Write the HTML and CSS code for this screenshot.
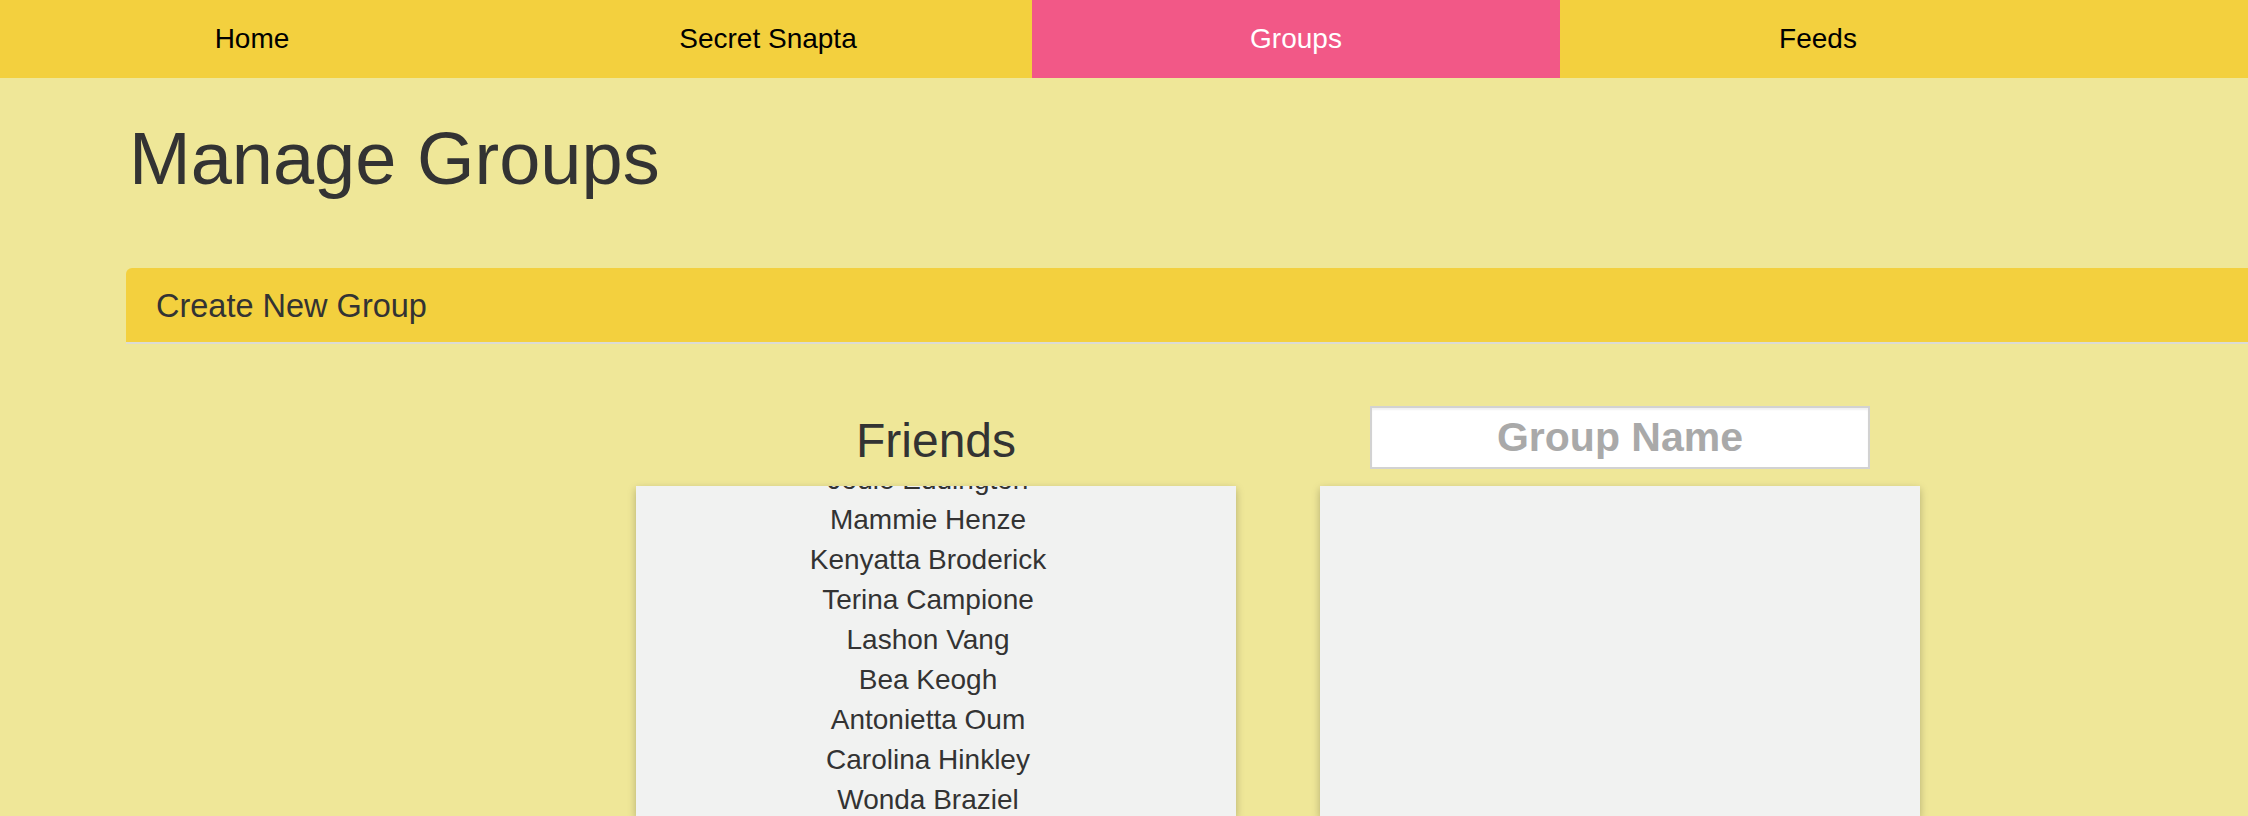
FILE: index.html
```html
<!DOCTYPE html>
<html lang="en">
<head>
    <meta charset="UTF-8">
    <meta name="viewport" content="width=device-width, initial-scale=1.0">
    <title>Manage Groups</title>
    <link rel="stylesheet" href="styles.css">
</head>
<body>
    <nav class="topnav">
        <a href="#" class="tab tab-home">Home</a>
        <a href="#" class="tab">Secret Snapta</a>
        <a href="#" class="tab active">Groups</a>
        <a href="#" class="tab tab-feeds">Feeds</a>
    </nav>

    <main class="page">
        <h1>Manage Groups</h1>

        <div class="panel-bar">Create New Group</div>

        <div class="columns">
            <div class="column">
                <div class="column-head">
                    <h2>Friends</h2>
                </div>
                <div class="list-box">
                    <ul class="friend-list">
                        <li>Jodie Eddington</li>
                        <li>Mammie Henze</li>
                        <li>Kenyatta Broderick</li>
                        <li>Terina Campione</li>
                        <li>Lashon Vang</li>
                        <li>Bea Keogh</li>
                        <li>Antonietta Oum</li>
                        <li>Carolina Hinkley</li>
                        <li>Wonda Braziel</li>
                    </ul>
                </div>
            </div>
            <div class="column">
                <div class="column-head">
                    <input type="text" class="group-name" placeholder="Group Name">
                </div>
                <div class="list-box"></div>
            </div>
        </div>
    </main>
</body>
</html>
```

FILE: styles.css
```css
body {
    margin: 0;
    font-family: "Liberation Sans", Arial, sans-serif;
    background-color: #efe798;
    color: #333;
}

/* top navigation */
.topnav {
    display: flex;
    height: 78px;
    background-color: #f3d03e;
}
.tab {
    width: 528px;
    line-height: 78px;
    text-align: center;
    font-size: 28px;
    color: #000;
    text-decoration: none;
}
.tab-home {
    width: 504px;
}
.tab-feeds {
    width: 516px;
}
.tab.active {
    background-color: #f25887;
    color: #fff;
}

.page {
    padding-left: 126px;
}
h1 {
    margin: 41px 0 69px 3px;
    font-size: 74px;
    line-height: 80px;
    font-weight: normal;
}

.panel-bar {
    height: 72px;
    padding: 2px 30px 0;
    line-height: 72px;
    font-size: 32.5px;
    background-color: #f3d03e;
    border-bottom: 2px solid #dcdcd4;
    border-top-left-radius: 6px;
}

.columns {
    display: flex;
    gap: 84px;
    margin-top: 62px;
    padding-left: 510px;
}
.column {
    width: 600px;
}
.column-head {
    height: 80px;
    display: flex;
    justify-content: center;
    align-items: flex-start;
}
h2 {
    margin: 11px 0 0;
    font-size: 48px;
    line-height: 48px;
    font-weight: normal;
}
.group-name {
    width: 500px;
    height: 63px;
    box-sizing: border-box;
    border: 2px solid #d2d2d2;
    box-shadow: inset 0 2px 2px rgba(0, 0, 0, 0.06);
    background: #fff;
    text-align: center;
    font-family: "Liberation Sans", Arial, sans-serif;
    font-size: 41px;
    font-weight: bold;
    color: #333;
    outline: none;
}
.group-name::placeholder {
    color: #a9a9a9;
}

.list-box {
    height: 330px;
    overflow: hidden;
    background-color: #f1f2f1;
    box-shadow: 0 3px 8px rgba(0, 0, 0, 0.25);
}
.friend-list {
    list-style: none;
    margin: -26px 0 0;
    padding: 0 16px 0 0;
    text-align: center;
    font-size: 28px;
    line-height: 40px;
}
```
